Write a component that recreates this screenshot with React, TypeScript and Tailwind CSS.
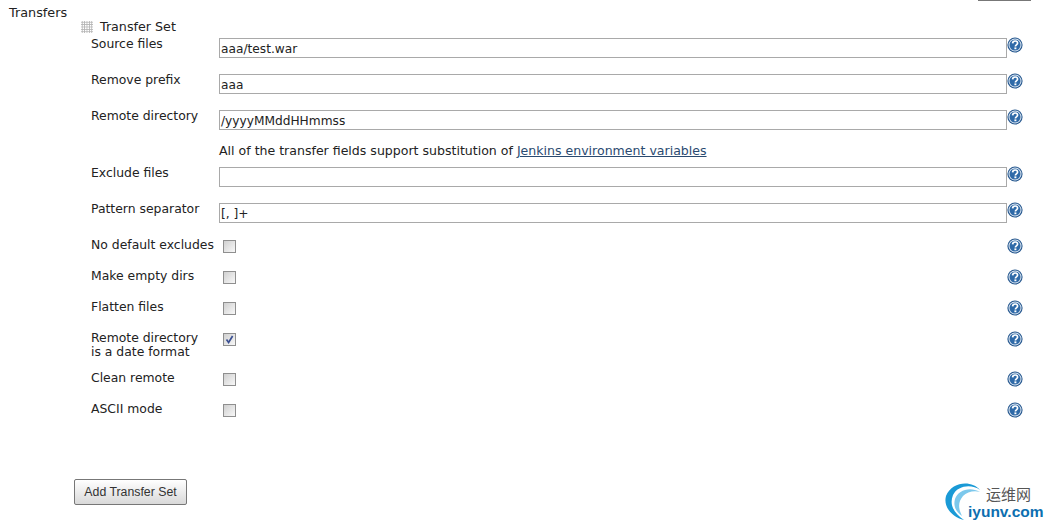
import { ReactNode } from 'react'

const verdana = 'font-["DejaVu_Sans",sans-serif]'

function HelpIcon() {
  return (
    <svg width="16" height="16" viewBox="0 0 16 16" className="block">
      <circle cx="8" cy="8" r="7.6" fill="#26588f" />
      <circle cx="8" cy="8" r="6.5" fill="#dfe8f2" />
      <circle cx="8" cy="8" r="5.5" fill="#2f6aa8" />
      <path d="M5.6 6.4C5.7 4.7 6.9 4 8.1 4c1.5 0 2.5.9 2.5 2.1 0 1.9-2.2 1.7-2.2 3.4" fill="none" stroke="#fff" strokeWidth="1.7" />
      <rect x="7.4" y="10.4" width="2" height="1.8" fill="#fff" />
    </svg>
  )
}

function Row({ label, children, className }: { label: ReactNode; children: ReactNode; className: string }) {
  return (
    <div className={`flex items-start ${className}`}>
      <div className="w-[128px] shrink-0 text-[12.4px] leading-[14px] whitespace-nowrap">{label}</div>
      <div className="w-[788px] shrink-0">{children}</div>
      <HelpIcon />
    </div>
  )
}

function TextRow({ label, value, className }: { label: string; value?: string; className: string }) {
  return (
    <Row label={label} className={className}>
      <div className="mt-[1px] h-[20px] border border-[#a9a9a9] bg-white pl-[1px] text-[12.2px] leading-[20px] text-[#222]">
        {value}
      </div>
    </Row>
  )
}

function CheckRow({ label, checked, className }: { label: ReactNode; checked?: boolean; className: string }) {
  return (
    <Row label={label} className={className}>
      <div className="ml-[4px] mt-[2px] flex h-[13px] w-[13px] items-center justify-center border border-[#8f8f8f] bg-gradient-to-br from-[#d0d0d0] to-[#f8f8f8]">
        {checked && (
          <svg width="9" height="9" viewBox="0 0 9 9">
            <path d="M1.5 4.5L3.6 7.4L7.6 1" fill="none" stroke="#3a4f92" strokeWidth="1.7" />
          </svg>
        )}
      </div>
    </Row>
  )
}

export default function App() {
  return (
    <div className={`relative h-[528px] w-[1048px] overflow-hidden bg-white text-[12.4px] text-[#222] ${verdana}`}>
      <div className="ml-[978px] h-[1px] w-[53px] bg-[#777]" />

      <div className="pl-[9px] pt-[5px] text-[12.8px] leading-[14px]">Transfers</div>

      <div className="ml-[81px] flex items-center">
        <div className="h-[12px] w-[12px] bg-[radial-gradient(#b4b4b4_1px,transparent_1px)] bg-[length:2.4px_2.4px]" />
        <span className="ml-[7px] text-[12.7px] leading-[14px]">Transfer Set</span>
      </div>

      <div className="ml-[91px]">
        <TextRow label="Source files" value="aaa/test.war" className="mt-[3px]" />
        <TextRow label="Remove prefix" value="aaa" className="mt-[15px]" />
        <TextRow label="Remote directory" value="/yyyyMMddHHmmss" className="mt-[15px]" />

        <div className="ml-[128px] mt-[14px] text-[12.56px] leading-[14px]">
          All of the transfer fields support substitution of{' '}
          <span className="text-[#2a4a70] underline">Jenkins environment variables</span>
        </div>

        <TextRow label="Exclude files" className="mt-[8px]" />
        <TextRow label="Pattern separator" value="[, ]+" className="mt-[15px]" />

        <CheckRow label="No default excludes" className="mt-[15px]" />
        <CheckRow label="Make empty dirs" className="mt-[15px]" />
        <CheckRow label="Flatten files" className="mt-[15px]" />
        <CheckRow label={<>Remote directory<br />is a date format</>} checked className="mt-[15px]" />
        <CheckRow label="Clean remote" className="mt-[12px]" />
        <CheckRow label="ASCII mode" className="mt-[15px]" />
      </div>

      <div className="ml-[74px] mt-[61px]">
        <button className='h-[26px] w-[113px] rounded-[2px] border border-[#777] bg-gradient-to-b from-white to-[#d9d9d9] font-["Liberation_Sans",sans-serif] text-[12.3px] text-[#333]'>
          Add Transfer Set
        </button>
      </div>

      <div className="absolute left-[944px] top-[480px] h-[44px] w-[100px]">
        <svg width="44" height="42" viewBox="0 0 44 42" className="absolute left-0 top-0">
          <path d="M36 10C28 0 8 1 2 16C-1 27 8 37 20 40C10 33 5 25 9 15C14 5 28 4 36 10Z" fill="#1a9ad6" />
          <path d="M36 12C26 6 14 10 11 19C9 26 12 32 18 36C14 28 14 22 19 16C23 12 30 10 36 12Z" fill="#7cc8ec" />
        </svg>
        <span className='absolute left-[42px] top-[5px] whitespace-nowrap font-["Noto_Sans_CJK_SC",sans-serif] text-[15px] leading-[18px] text-[#555]'>运维网</span>
        <span className='absolute left-[24px] top-[23px] whitespace-nowrap font-["Liberation_Sans",sans-serif] text-[15.5px] font-bold leading-[18px] text-[#0d6fb0]'>iyunv.com</span>
      </div>
    </div>
  )
}
